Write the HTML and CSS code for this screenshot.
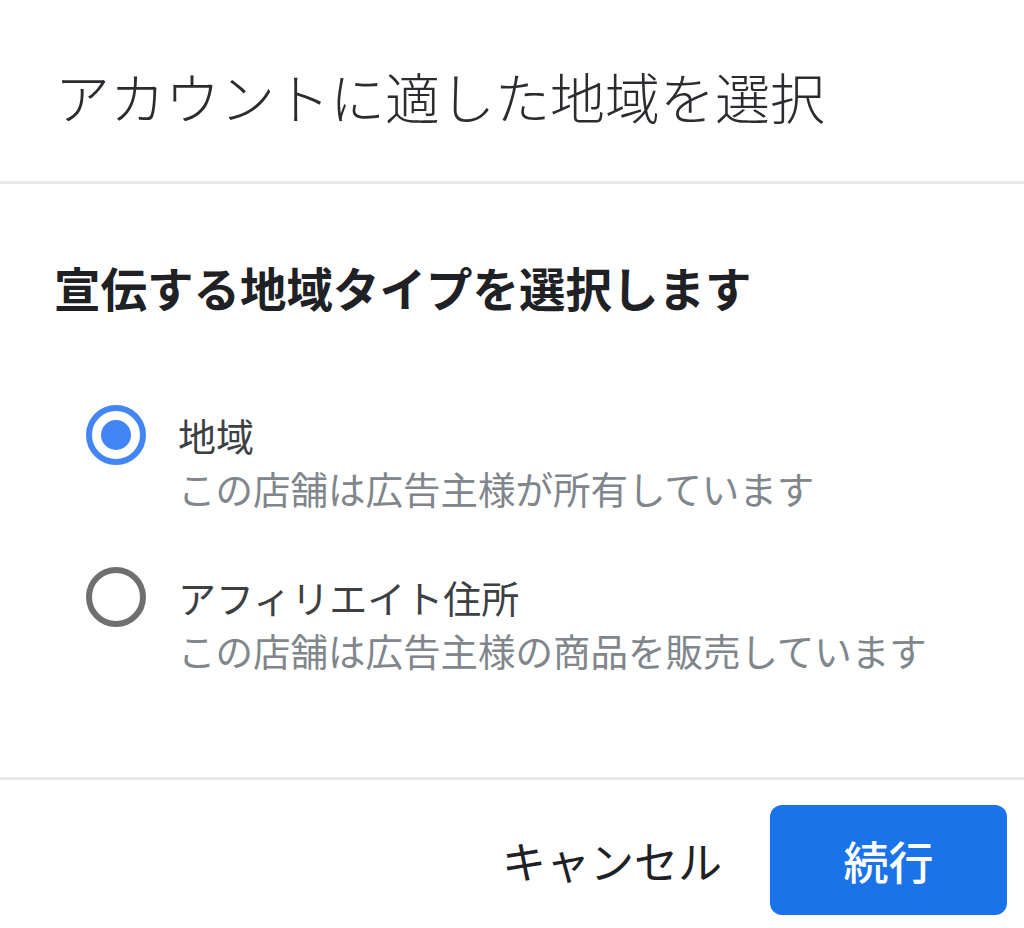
FILE: index.html
```html
<html lang="ja"><head>
    <meta charset="UTF-8">
    <meta name="viewport" content="width=device-width, initial-scale=1.0">
    <title>地域を選択</title>
    <link rel="stylesheet" href="styles.css">
</head>
<body>
    <div class="dialog">
        <div class="dialog-header">
            <h1 class="dialog-title">アカウントに適した地域を選択</h1>
        </div>

        <div class="dialog-body">
            <h2 class="section-title">宣伝する地域タイプを選択します</h2>

            <label class="option">
                <input type="radio" name="tipo" checked>
                <span class="radio"></span>
                <span class="option-text">
                    <span class="option-label">地域</span>
                    <span class="option-sub">この店舗は広告主様が所有しています</span>
                </span>
            </label>

            <label class="option">
                <input type="radio" name="tipo">
                <span class="radio"></span>
                <span class="option-text">
                    <span class="option-label">アフィリエイト住所</span>
                    <span class="option-sub">この店舗は広告主様の商品を販売しています</span>
                </span>
            </label>
        </div>

        <div class="dialog-footer">
            <button type="button" class="btn-cancel">キャンセル</button>
            <button type="button" class="btn-continue">続行</button>
        </div>
    </div>
</body>
</html>
```

FILE: styles.css
```css
body {
    margin: 0;
    padding: 0;
    background: #ffffff;
    font-family: "Noto Sans CJK JP", "Noto Sans", sans-serif;
    color: #202124;
}

.dialog {
    width: 1024px;
    height: 928px;
    display: flex;
    flex-direction: column;
}

/* titulo no topo */
.dialog-header {
    height: 184px;
    padding: 10px 56px 0 55px;
    box-sizing: border-box;
    display: flex;
    align-items: center;
    border-bottom: 3px solid #e8e8e8;
}

.dialog-title {
    margin: 0;
    font-size: 55px;
    font-weight: 300;
    line-height: 1;
    color: #2a2c2f;
}

.dialog-body {
    padding: 80px 56px 0 54px;
    height: 593px;
    box-sizing: border-box;
}

.section-title {
    margin: 0 0 98px 0;
    font-size: 46.5px;
    font-weight: bold;
    line-height: 1;
    color: #202124;
}

.option {
    display: flex;
    align-items: flex-start;
    margin-bottom: 56px;
    cursor: pointer;
}

.option input {
    display: none;
}

/* bolinha do radio */
.radio {
    width: 60px;
    height: 60px;
    margin: -4px 32px 0 32px;
    box-sizing: border-box;
    border: 6px solid #6f6f6f;
    border-radius: 50%;
    display: flex;
    align-items: center;
    justify-content: center;
    flex-shrink: 0;
}

.option input:checked + .radio {
    border-color: #4285f4;
}

.option input:checked + .radio::after {
    content: "";
    width: 30px;
    height: 30px;
    border-radius: 50%;
    background: #4285f4;
}

.option-text {
    display: flex;
    flex-direction: column;
}

.option-label {
    font-size: 38px;
    line-height: 52px;
    color: #3c4043;
}

.option-sub {
    font-size: 37.5px;
    line-height: 54px;
    color: #80868b;
}

.dialog-footer {
    border-top: 3px solid #e8e8e8;
    padding: 25px 17px 0 0;
    display: flex;
    justify-content: flex-end;
    align-items: flex-start;
}

.btn-cancel {
    height: 110px;
    margin-right: 48px;
    padding: 0;
    border: none;
    background: none;
    font-family: inherit;
    font-size: 44px;
    color: #202124;
    cursor: pointer;
}

.btn-continue {
    width: 237px;
    height: 110px;
    border: none;
    border-radius: 12px;
    background: #1a73e8;
    color: #ffffff;
    font-family: inherit;
    font-size: 45px;
    font-weight: 500;
    cursor: pointer;
}
```
